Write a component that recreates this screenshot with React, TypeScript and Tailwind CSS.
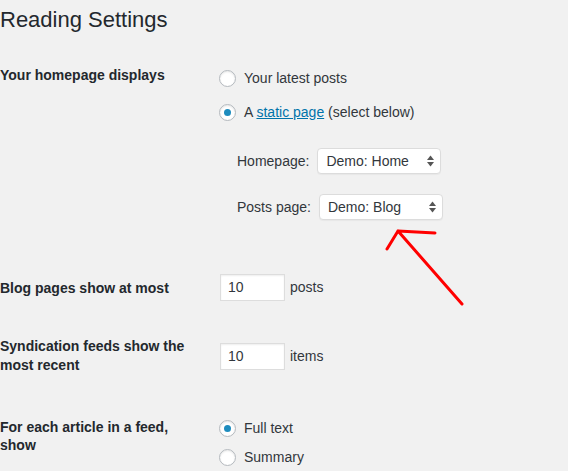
import React from "react";

function Radio({ checked, label }: { checked?: boolean; label: React.ReactNode }) {
  return (
    <label className="flex items-center h-[20px] text-[14px] text-[#32373c]">
      <span className="ml-[-1px] w-[17px] h-[17px] rounded-full border border-[#b4b9be] bg-white shadow-[inset_0_1px_2px_rgba(0,0,0,0.1)] flex items-center justify-center">
        {checked && <span className="w-[7px] h-[7px] rounded-full bg-[#1e8cbe]" />}
      </span>
      <span className="ml-[8px]">{label}</span>
    </label>
  );
}

function SelectBox({ value }: { value: string }) {
  return (
    <div className="w-[124px] h-[26px] rounded-[4px] border border-[#dcdcdc] bg-white shadow-[0_1px_1px_rgba(0,0,0,0.04)] flex items-center justify-between pl-[8px] pr-[5px] text-[14px] text-[#32373c]">
      <span>{value}</span>
      <svg width="9" height="12" viewBox="0 0 9 12">
        <path d="M4.5 0.5 L8 5 L1 5 Z" fill="#555" />
        <path d="M4.5 11.5 L8 7 L1 7 Z" fill="#555" />
      </svg>
    </div>
  );
}

function NumberBox({ value }: { value: string }) {
  return (
    <div className="w-[65px] h-[27px] border border-[#dddddd] bg-white shadow-[inset_0_1px_2px_rgba(0,0,0,0.07)] flex items-center pl-[7px] text-[14px] text-[#32373c]">
      {value}
    </div>
  );
}

export default function App() {
  return (
    <div
      className="relative min-h-screen bg-[#f1f1f1] text-[#23282d] overflow-hidden"
      style={{ fontFamily: '"Liberation Sans", Arial, sans-serif' }}
    >
      <h1 className="pt-[5px] text-[22px] leading-[29px] font-normal text-[#23282d]">Reading Settings</h1>

      {/* homepage displays */}
      <div className="flex mt-[32px]">
        <div className="w-[220px] text-[14px] font-bold leading-[19px]">Your homepage displays</div>
        <div className="pt-[2px] flex flex-col">
          <Radio label="Your latest posts" />
          <div className="mt-[14px]">
            <Radio
              checked
              label={
                <>
                  A{" "}
                  <a href="#" className="text-[#0073aa] underline">
                    static page
                  </a>{" "}
                  (select below)
                </>
              }
            />
          </div>
          <div className="pl-[17px] mt-[26px] flex flex-col gap-[20px] text-[14px] text-[#32373c]">
            <div className="flex items-center gap-[8px]">
              <span>Homepage:</span>
              <SelectBox value="Demo: Home" />
            </div>
            <div className="flex items-center gap-[8px]">
              <span>Posts page:</span>
              <SelectBox value="Demo: Blog" />
            </div>
          </div>
        </div>
      </div>

      {/* blog pages */}
      <div className="flex mt-[54px]">
        <div className="w-[220px] pt-[5px] text-[14px] font-bold leading-[19px]">Blog pages show at most</div>
        <div className="flex items-start gap-[5px] text-[14px] text-[#32373c]">
          <div className="flex items-center gap-[5px]">
            <NumberBox value="10" />
            <span>posts</span>
          </div>
        </div>
      </div>

      {/* syndication */}
      <div className="flex mt-[36px]">
        <div className="w-[220px] text-[14px] font-bold leading-[19px]">
          Syndication feeds show the
          <br />
          most recent
        </div>
        <div className="pt-[6px]">
          <div className="flex items-center gap-[5px] text-[14px] text-[#32373c]">
            <NumberBox value="10" />
            <span>items</span>
          </div>
        </div>
      </div>

      {/* feed article */}
      <div className="flex mt-[43px]">
        <div className="w-[220px] text-[14px] font-bold leading-[18px]">
          For each article in a feed,
          <br />
          show
        </div>
        <div className="flex flex-col gap-[9px]">
          <Radio checked label="Full text" />
          <Radio label="Summary" />
        </div>
      </div>

      {/* red annotation arrow */}
      <svg
        className="absolute left-[380px] top-[222px] pointer-events-none"
        width="90"
        height="90"
        viewBox="0 0 90 90"
      >
        <path
          d="M18 9 L82 82 M18 9 L55 11 M18 9 L7 27"
          stroke="#ff0000"
          strokeWidth="3"
          strokeLinecap="round"
          fill="none"
        />
      </svg>
    </div>
  );
}
